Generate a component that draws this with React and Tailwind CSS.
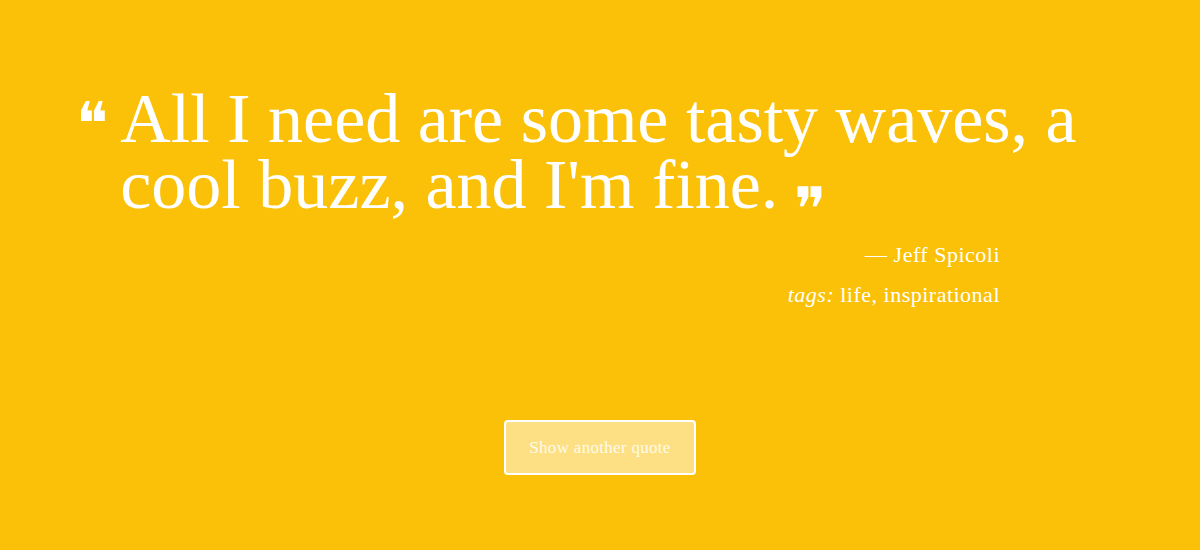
export default function App() {
  return (
    <div className="w-[1200px] h-[550px] bg-[#fbc108] font-['Liberation_Serif',serif] text-white overflow-hidden">
      <div className="pl-[76px] pt-[86px] w-[1100px]">
        <div className="flex items-start">
          <span className="font-['DejaVu_Sans',sans-serif] text-[60px] leading-[60px] mt-[8px] mr-[12px]">❝</span>
          <p className="text-[70px] leading-[66px] w-[990px]">
            All I need are some tasty waves, a cool buzz, and I'm fine.
            <span className="font-['DejaVu_Sans',sans-serif] text-[60px] align-top leading-[60px] ml-[16px] relative top-[27px]">❞</span>
          </p>
        </div>
        <div className="w-[924px] text-right text-[22px] tracking-[0.5px] mt-[20px]">
          <p>— Jeff Spicoli</p>
          <p className="mt-[7px]">
            <em>tags:</em> life, inspirational
          </p>
        </div>
      </div>
      <div className="flex justify-center mt-[109px]">
        <button className="w-[192px] h-[55px] rounded-[4px] border-2 border-white bg-white/50 text-[17px] tracking-[0.3px] text-[#fffbe8]">
          Show another quote
        </button>
      </div>
    </div>
  );
}
